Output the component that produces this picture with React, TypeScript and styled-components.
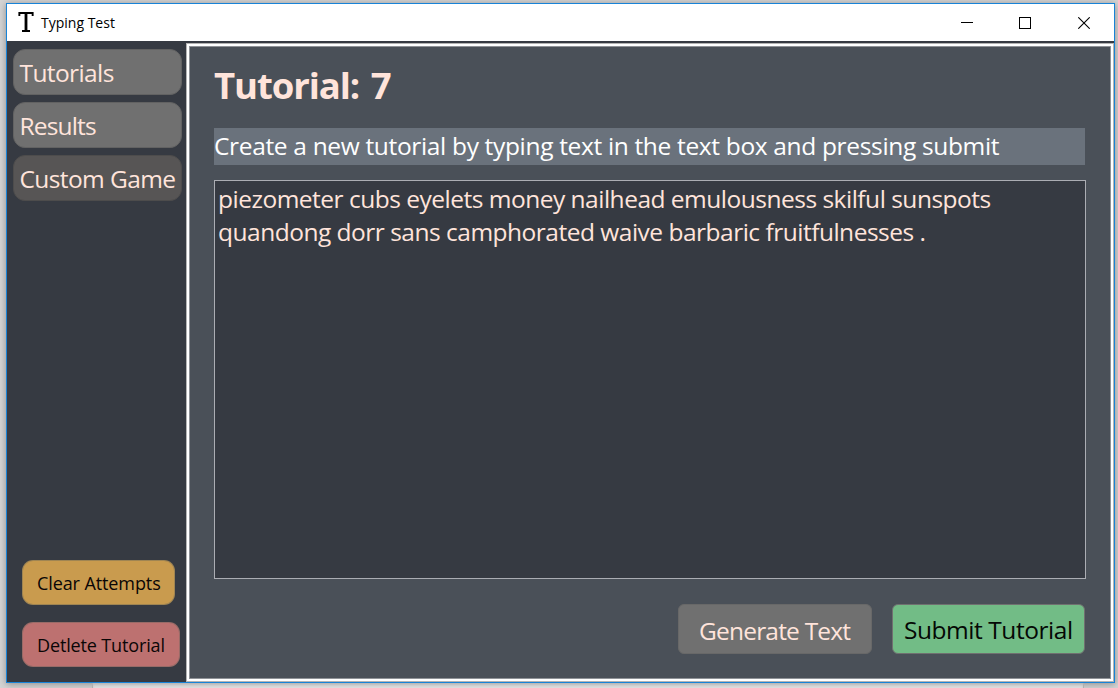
import React from "react";
import styled, { createGlobalStyle } from "styled-components";

const GlobalStyle = createGlobalStyle`
  * { box-sizing: border-box; }
  body { margin: 0; overflow: hidden; background: #d6d6d6; }
  button { appearance: none; margin: 0; font: inherit; }
`;

const Desktop = styled.div`
  display: flex;
  flex-direction: column;
  width: 1118px;
  height: 688px;
  padding: 3px 3px 0 6px;
  background: #d4d4d4;
  font-family: "Open Sans", "Noto Sans", sans-serif;
  overflow: hidden;
`;

const Window = styled.div`
  display: flex;
  flex-direction: column;
  flex: none;
  width: 1109px;
  height: 680px;
  border: 1px solid #1883d7;
  background: #363a42;
  box-shadow: 0 1px 7px rgba(0, 0, 0, 0.35);
`;

/* Sliver of the page that shows beneath the window */
const Backdrop = styled.div`
  flex: 1;
  width: 992px;
  margin-left: 86px;
  border: solid #b0b0b0;
  border-width: 0 1px;
  background: #dcdcdc;
  box-shadow: inset 0 3px 3px -1px rgba(0, 0, 0, 0.18);
`;

const TitleBar = styled.header`
  display: flex;
  align-items: center;
  height: 37px;
  flex: none;
  padding-left: 11px;
  background: #fff;
`;

const AppIcon = styled.svg`
  display: block;
  width: 16px;
  height: 20px;
  margin: -1px 7px 0 0;
`;

const Caption = styled.span`
  flex: 1;
  font-size: 14px;
  line-height: 20px;
  color: #000;
`;

const WindowControls = styled.div`
  display: flex;
  padding-right: 1px;
`;

const WindowControl = styled.button`
  display: grid;
  place-items: center;
  width: 58.5px;
  height: 36px;
  padding: 0;
  border: 0;
  background: transparent;
  svg { display: block; }
`;

const Body = styled.div`
  display: flex;
  flex: 1;
  min-height: 0;
`;

const Sidebar = styled.nav`
  display: flex;
  flex-direction: column;
  justify-content: space-between;
  width: 179px;
  flex: none;
  padding: 8px 4px 15px 6px;
  background: #363a42;
`;

const NavList = styled.div`
  display: grid;
  grid-template-columns: 169px;
  gap: 7px;
`;

const NavButton = styled.button<{ $active?: boolean; $tracking: number }>`
  height: 46px;
  padding: 2px 0 0 5.5px;
  border: 1px solid ${(p) => (p.$active ? "#4d4c4c" : "#626262")};
  border-radius: 12px;
  background: ${(p) => (p.$active ? "#575555" : "#707070")};
  color: #ffe4db;
  font-size: 24.5px;
  line-height: 40px;
  letter-spacing: ${(p) => p.$tracking}px;
  text-align: left;
  white-space: nowrap;
`;

const ActionList = styled.div`
  display: grid;
  justify-items: start;
  gap: 17px;
  padding-left: 9px;
`;

const ActionButton = styled.button<{ $tone: string; $width: number; $tracking: number }>`
  width: ${(p) => p.$width}px;
  height: 45px;
  padding: 0 0 0 14px;
  border: 1px solid rgba(100, 100, 90, 0.4);
  border-radius: 11px;
  background-color: ${(p) => p.$tone};
  color: #0a0606;
  font-size: 18px;
  line-height: 40px;
  letter-spacing: ${(p) => p.$tracking}px;
  text-align: left;
  white-space: nowrap;
`;

const Frame = styled.div`
  flex: 1;
  min-width: 0;
  margin-top: 2px;
  border: 1px solid #b4b4b4;
`;

const Ridge = styled.div`
  height: 100%;
  border: 2px solid #fff;
`;

const Panel = styled.main`
  display: flex;
  flex-direction: column;
  height: 100%;
  padding: 14px 23px 24px 24px;
  border: 1px solid #8f9297;
  background: #4a5058;
`;

const Heading = styled.h1`
  height: 48px;
  margin: 0;
  color: #ffe4db;
  font-size: 36.5px;
  font-weight: 700;
  line-height: 48px;
  letter-spacing: -1.1px;
  word-spacing: 3.5px;
`;

const Hint = styled.p`
  height: 37px;
  width: 871px;
  margin: 19px 0 0;
  background: #6a727c;
  color: #fff;
  font-size: 24.5px;
  line-height: 35px;
  letter-spacing: -0.335px;
  white-space: nowrap;
`;

const TextBox = styled.div`
  width: 872px;
  height: 399px;
  margin-top: 15px;
  padding: 1px 3px;
  border: 1px solid #abadb3;
  background: #363a42;
`;

const TextLine = styled.div`
  height: 33px;
  color: #ffe4db;
  font-size: 24.5px;
  line-height: 33px;
  letter-spacing: -0.5px;
  white-space: nowrap;
`;

const Footer = styled.footer`
  display: flex;
  justify-content: flex-end;
  gap: 20px;
  width: 871px;
  margin-top: 25px;
`;

const FooterButton = styled.button<{ $primary?: boolean; $tracking: number }>`
  width: ${(p) => (p.$primary ? 193 : 194)}px;
  height: 50px;
  padding: ${(p) => (p.$primary ? "1px 0 0 11px" : "3px 0 0 20px")};
  border: 1px solid ${(p) => (p.$primary ? "#707070" : "#686868")};
  border-radius: 6px;
  background: ${(p) => (p.$primary ? "#72bc86" : "#707070")};
  color: ${(p) => (p.$primary ? "#050805" : "#ffe4db")};
  font-size: 24.5px;
  line-height: 44px;
  letter-spacing: ${(p) => p.$tracking}px;
  text-align: left;
  white-space: nowrap;
`;

export default function App() {
  return (
    <>
      <GlobalStyle />
      <Desktop>
        <Window>
          <TitleBar>
            <AppIcon viewBox="0 0 16 20">
              <path d="M.4 0H15.6V4H13.7V2H9.4V18H12V20H4V18H6.6V2H2.3V4H.4Z" fill="#000" />
            </AppIcon>
            <Caption>Typing Test</Caption>
            <WindowControls>
              <WindowControl aria-label="Minimize">
                <svg width="12" height="12" shapeRendering="crispEdges">
                  <path d="M0 5H12V6H0Z" />
                </svg>
              </WindowControl>
              <WindowControl aria-label="Maximize">
                <svg width="12" height="12" shapeRendering="crispEdges">
                  <path d="M.5 .5H11.5V11.5H.5Z" fill="none" stroke="#000" />
                </svg>
              </WindowControl>
              <WindowControl aria-label="Close">
                <svg width="12" height="12">
                  <path d="M.3 .3L11.7 11.7M11.7 .3L.3 11.7" fill="none" stroke="#000" strokeWidth="1.1" />
                </svg>
              </WindowControl>
            </WindowControls>
          </TitleBar>
          <Body>
            <Sidebar>
              <NavList>
                <NavButton $tracking={-0.6}>Tutorials</NavButton>
                <NavButton $tracking={-0.85}>Results</NavButton>
                <NavButton $active $tracking={-0.6}>Custom Game</NavButton>
              </NavList>
              <ActionList>
                <ActionButton $tone="#c99b4e" $width={153} $tracking={-0.1}>Clear Attempts</ActionButton>
                <ActionButton $tone="#bd7170" $width={158} $tracking={-0.14}>Detlete Tutorial</ActionButton>
              </ActionList>
            </Sidebar>
            <Frame>
              <Ridge>
                <Panel>
                  <Heading>Tutorial: 7</Heading>
                  <Hint>Create a new tutorial by typing text in the text box and pressing submit</Hint>
                  <TextBox>
                    <TextLine>piezometer cubs eyelets money nailhead emulousness skilful sunspots</TextLine>
                    <TextLine>quandong dorr sans camphorated waive barbaric fruitfulnesses .</TextLine>
                  </TextBox>
                  <Footer>
                    <FooterButton $tracking={-0.8}>Generate Text</FooterButton>
                    <FooterButton $primary $tracking={-0.45}>Submit Tutorial</FooterButton>
                  </Footer>
                </Panel>
              </Ridge>
            </Frame>
          </Body>
        </Window>
        <Backdrop />
      </Desktop>
    </>
  );
}
